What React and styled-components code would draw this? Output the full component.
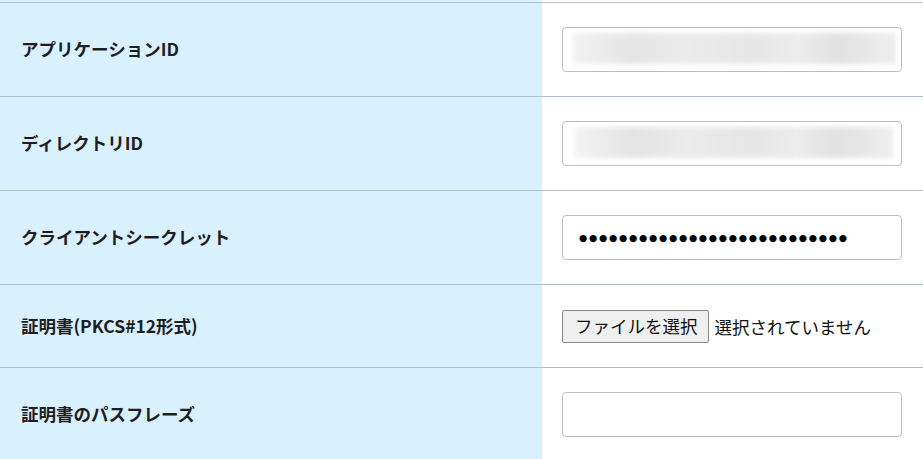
import styled, { createGlobalStyle } from 'styled-components'

const GlobalStyle = createGlobalStyle`
    html, body {
        margin:0;
        padding:0;
        background:#fff;
    }
    body {
        font-family:"Noto Sans CJK JP", "Noto Sans", sans-serif;
        color:#222;
        overflow:hidden;
    }
`

const rows = [
    { label: 'アプリケーションID', kind: 'redacted', blur: [10, 6, 6, 8] },
    { label: 'ディレクトリID', kind: 'redacted', blur: [13, 9, 6, 8] },
    { label: 'クライアントシークレット', kind: 'password' },
    { label: '証明書(PKCS#12形式)', kind: 'file' },
    { label: '証明書のパスフレーズ', kind: 'text' },
]

const App = () => {
    return (
        <Page>
            <GlobalStyle />
            <Form onSubmit={(e) => e.preventDefault()}>
                <Stub>
                    <StubCell />
                    <div />
                </Stub>
                {rows.map((row) => (
                    <Row key={row.label}>
                        <Label>{row.label}</Label>
                        <Value>
                            {row.kind === 'redacted' && (
                                <Field>
                                    <Input type="text" readOnly />
                                    <Redaction
                                        style={{
                                            left: row.blur[0],
                                            right: row.blur[1],
                                            top: row.blur[2],
                                            bottom: row.blur[3],
                                        }}
                                    />
                                </Field>
                            )}
                            {row.kind === 'password' && (
                                <Input type="text" readOnly value={'●'.repeat(27)} $secret />
                            )}
                            {row.kind === 'file' && (
                                <FilePicker>
                                    <FileButton type="button">ファイルを選択</FileButton>
                                    <FileStatus>選択されていません</FileStatus>
                                </FilePicker>
                            )}
                            {row.kind === 'text' && <Input type="text" />}
                        </Value>
                    </Row>
                ))}
            </Form>
        </Page>
    )
}

const Page = styled.div`
    width:923px;
    height:459px;
    overflow:hidden;
    background:#fff;
`
const Form = styled.form`
    display:flex;
    flex-direction:column;
`
const Stub = styled.div`
    display:grid;
    grid-template-columns:542px 1fr;
    height:2px;
    border-bottom:1px solid #acc1cd;
`
const StubCell = styled.div`
    background:#d9f0fe;
`
const Row = styled.div`
    display:grid;
    grid-template-columns:542px 1fr;
    border-bottom:1px solid #acc1cd;
`
const Label = styled.div`
    display:flex;
    align-items:center;
    background:#d9f0fe;
    padding:0 21px 2px;
    font-size:17.5px;
    font-weight:700;
    color:#1e1e1e;
`
const Value = styled.div`
    display:flex;
    align-items:center;
    padding:24px 20px;
`
const Field = styled.div`
    position:relative;
    width:340px;
    height:45px;
`
const Input = styled.input`
    box-sizing:border-box;
    width:340px;
    height:45px;
    border:1px solid #bdbdbd;
    border-radius:4px;
    padding:0 16px;
    background:#fff;
    font-family:"DejaVu Sans", sans-serif;
    font-size:${(p) => (p.$secret ? '9.5px' : '16px')};
    letter-spacing:${(p) => (p.$secret ? '1.7px' : '0')};
    color:#000;
    outline:none;
`
const Redaction = styled.span`
    position:absolute;
    background:linear-gradient(90deg, #f3f3f3 0%, #e4e4e4 18%, #ebebeb 35%, #e6e6e6 55%, #ececec 70%, #e1e1e1 82%, #eeeeee 100%);
    filter:blur(2.5px);
    pointer-events:none;
`
const FilePicker = styled.div`
    display:flex;
    align-items:center;
    gap:6px;
    font-family:"Noto Sans CJK JP", "Noto Sans", sans-serif;
    font-size:17.5px;
`
const FileButton = styled.button`
    box-sizing:border-box;
    height:33px;
    margin:0.5px 0;
    padding:0 10px 0 12px;
    background:#efefef;
    border:1px solid #8a8a8a;
    border-radius:2px;
    font-family:inherit;
    font-size:17.5px;
    color:#111;
    line-height:1;
`
const FileStatus = styled.span`
    color:#111;
`

export default App
